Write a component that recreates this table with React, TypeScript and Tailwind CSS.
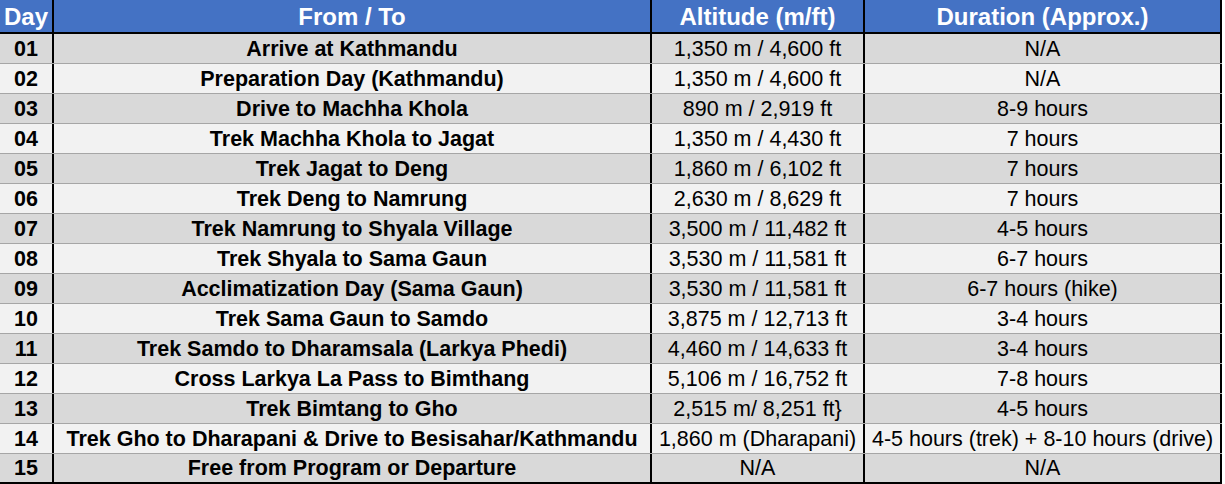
const rows: [string, string, string, string][] = [
  ['01', 'Arrive at Kathmandu', '1,350 m / 4,600 ft', 'N/A'],
  ['02', 'Preparation Day (Kathmandu)', '1,350 m / 4,600 ft', 'N/A'],
  ['03', 'Drive to Machha Khola', '890 m / 2,919 ft', '8-9 hours'],
  ['04', 'Trek Machha Khola to Jagat', '1,350 m / 4,430 ft', '7 hours'],
  ['05', 'Trek Jagat to Deng', '1,860 m / 6,102 ft', '7 hours'],
  ['06', 'Trek Deng to Namrung', '2,630 m / 8,629 ft', '7 hours'],
  ['07', 'Trek Namrung to Shyala Village', '3,500 m / 11,482 ft', '4-5 hours'],
  ['08', 'Trek Shyala to Sama Gaun', '3,530 m / 11,581 ft', '6-7 hours'],
  ['09', 'Acclimatization Day (Sama Gaun)', '3,530 m / 11,581 ft', '6-7 hours (hike)'],
  ['10', 'Trek Sama Gaun to Samdo', '3,875 m / 12,713 ft', '3-4 hours'],
  ['11', 'Trek Samdo to Dharamsala (Larkya Phedi)', '4,460 m / 14,633 ft', '3-4 hours'],
  ['12', 'Cross Larkya La Pass to Bimthang', '5,106 m / 16,752 ft', '7-8 hours'],
  ['13', 'Trek Bimtang to Gho', '2,515 m/ 8,251 ft}', '4-5 hours'],
  ['14', 'Trek Gho to Dharapani & Drive to Besisahar/Kathmandu', '1,860 m (Dharapani)', '4-5 hours (trek) + 8-10 hours (drive)'],
  ['15', 'Free from Program or Departure', 'N/A', 'N/A'],
]

const cols = 'grid grid-cols-[54px_598px_213px_357px]'

export default function App() {
  return (
    <div className="w-[1225px] h-[484px] bg-white font-['Liberation_Sans',Arial,sans-serif] text-black">
      <div className="w-[1222px]">
        {/* Header */}
        <div className={`${cols} h-[34px] bg-[#4472c4] text-white font-bold text-[24px] leading-none border-b-2 border-black`}>
          <div className="flex items-center justify-center pt-px border-r-2 border-black">Day</div>
          <div className="flex items-center justify-center pt-px border-r-2 border-black">From / To</div>
          <div className="flex items-center justify-center pt-px border-r-2 border-black">Altitude (m/ft)</div>
          <div className="flex items-center justify-center pt-px border-r-2 border-black">Duration (Approx.)</div>
        </div>

        {/* Body */}
        {rows.map(([day, route, alt, dur], i) => (
          <div
            key={day}
            className={`${cols} h-[30px] text-[21.5px] leading-none ${
              i % 2 === 0 ? 'bg-[#d9d9d9]' : 'bg-[#f2f2f2]'
            } ${i === rows.length - 1 ? 'border-b-2 border-black' : 'border-b border-[#a6a6a6]'}`}
          >
            <div className="flex items-center justify-center pt-[2px] font-bold border-r-2 border-black">{day}</div>
            <div className="flex items-center justify-center pt-[2px] font-bold border-r-2 border-black whitespace-nowrap">{route}</div>
            <div className="flex items-center justify-center pt-[2px] border-r-2 border-black whitespace-nowrap">{alt}</div>
            <div className="flex items-center justify-center pt-[2px] border-r-2 border-black whitespace-nowrap">{dur}</div>
          </div>
        ))}
      </div>
    </div>
  )
}
